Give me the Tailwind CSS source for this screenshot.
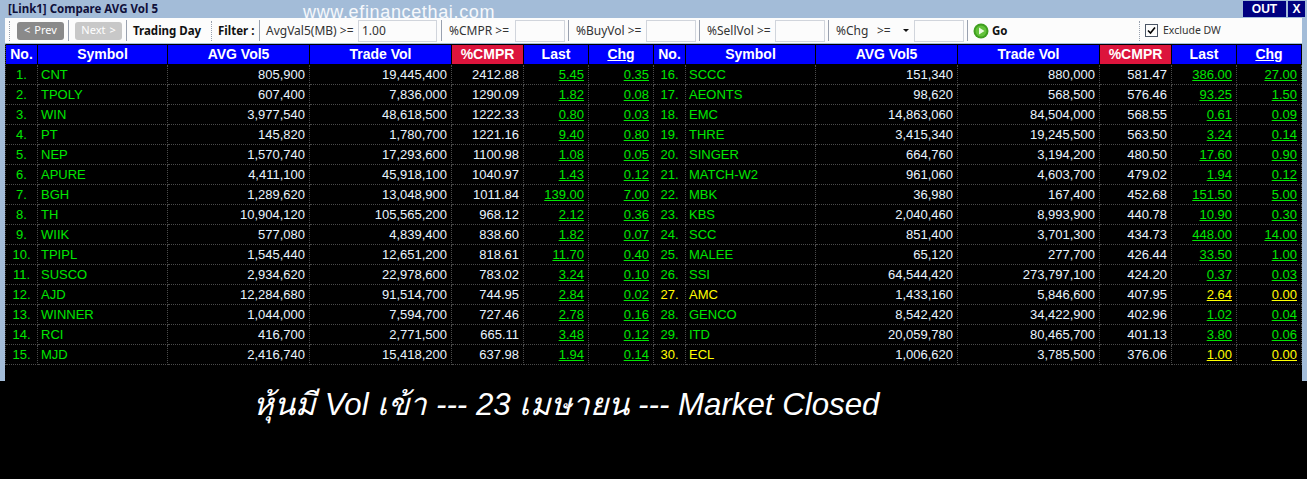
<!DOCTYPE html>
<html lang="th">
<head>
  <meta charset="UTF-8" />
  <title>Compare AVG Vol 5</title>
  <script src="https://cdn.jsdelivr.net/npm/@tailwindcss/browser@4"></script>
</head>
<body class="bg-black w-[1307px] h-[479px] overflow-hidden relative font-['Liberation_Sans',sans-serif]">
  <!-- window frame -->
  <div class="h-[381px] bg-[#a3bcd8] px-[1px] flex flex-col">
    <div class="h-[18px] flex items-center justify-between pl-[7px] pr-[1px]">
      <span class="text-[11.5px] font-bold text-[#10103a] font-['Noto_Sans',sans-serif]">[Link1] Compare AVG Vol 5</span>
      <div class="flex gap-[2px] h-[16px] -mt-[1px]">
        <span class="w-[43px] bg-[#000080] text-white text-[12px] font-bold flex items-center justify-center">OUT</span>
        <span class="w-[17px] bg-[#000080] text-white text-[12px] font-bold flex items-center justify-center">X</span>
      </div>
    </div>

    <!-- toolbar -->
    <div class="h-[25px] mx-[4px] bg-[#fcfcfc] flex items-center text-[12px] text-[#333] whitespace-nowrap font-['Noto_Sans',sans-serif]">
      <span class="w-[1px] h-[20px] ml-[4px] border-l border-dotted border-gray-400"></span>
      <button class="ml-[7px] w-[47px] h-[18px] rounded-[3px] bg-[#8a8a8a] text-white text-[11px] flex items-center justify-center gap-1"><span>&lt;</span><span>Prev</span></button>
      <span class="w-[1px] h-[21px] ml-[4px] bg-gray-400"></span>
      <button class="ml-[6px] w-[47px] h-[18px] rounded-[3px] bg-[#c8c8c8] text-white text-[11px] flex items-center justify-center gap-1"><span>Next</span><span>&gt;</span></button>
      <span class="w-[1px] h-[21px] ml-[4px] bg-gray-400"></span>
      <b class="ml-[6px] w-[68px] text-[11.5px] text-[#111]">Trading Day</b>
      <span class="w-[1px] h-[20px] ml-[10px] border-l border-dotted border-gray-400"></span>
      <b class="ml-[6px] w-[37px] text-[11.5px] text-[#111]">Filter :</b>
      <span class="w-[1px] h-[21px] ml-[4px] bg-gray-400"></span>
      <span class="ml-[6px] w-[92px]">AvgVal5(MB) &gt;=</span>
      <input value="1.00" class="w-[79px] h-[22px] border border-gray-300 px-[3px] text-[12px]" />
      <span class="w-[1px] h-[21px] ml-[4px] bg-gray-400"></span>
      <span class="ml-[7px] w-[66px]">%CMPR &gt;=</span>
      <input class="w-[50px] h-[22px] border border-gray-300" />
      <span class="w-[1px] h-[21px] ml-[3px] bg-gray-400"></span>
      <span class="ml-[7px] w-[70px]">%BuyVol &gt;=</span>
      <input class="w-[50px] h-[22px] border border-gray-300" />
      <span class="w-[1px] h-[21px] ml-[3px] bg-gray-400"></span>
      <span class="ml-[7px] w-[68px]">%SellVol &gt;=</span>
      <input class="w-[50px] h-[22px] border border-gray-300" />
      <span class="w-[1px] h-[21px] ml-[3px] bg-gray-400"></span>
      <span class="ml-[7px] w-[41px]">%Chg</span>
      <span class="w-[24px]">&gt;=</span>
      <svg class="w-[13px]" width="13" height="5" viewBox="0 0 13 5"><path d="M2 1h6L5 4z" fill="#111"/></svg>
      <input class="w-[50px] h-[22px] border border-gray-300" />
      <span class="w-[1px] h-[21px] ml-[3px] bg-gray-400"></span>
      <svg class="ml-[5px]" width="16" height="16" viewBox="0 0 16 16"><circle cx="8" cy="8" r="7.5" fill="#3f9f1f"/><circle cx="8" cy="8" r="5.5" fill="#63c23a"/><path d="M6 4.5l5.5 3.5L6 11.5z" fill="#eafbe0"/></svg>
      <b class="ml-[3px] w-[15px] text-[11.5px] text-[#111]">Go</b>
      <span class="w-[1px] h-[20px] ml-[132px] border-l border-dotted border-gray-400"></span>
      <span class="ml-[5px] w-[13px] h-[13px] border border-gray-600 flex items-center justify-center"><svg width="9" height="9" viewBox="0 0 9 9"><path d="M1 4.5l2.5 2.5L8 1.5" fill="none" stroke="#000" stroke-width="1.6"/></svg></span>
      <span class="ml-[5px] text-[10.5px]">Exclude DW</span>
    </div>

    <!-- quote table -->
    <div class="mt-[1px] mx-[4px] bg-black flex-1">
      <div id="board" class="grid grid-cols-[32px_130px_142px_142px_72px_65px_65px_32px_130px_142px_142px_72px_65px_65px] auto-rows-[20px] text-[13px] pt-[1px] border-l border-dotted border-[#4a4a4a] h-[321px]"></div>
    </div>
  </div>

  <!-- overlays burned into the capture -->
  <div class="absolute left-[303px] top-[1px] text-[18px] tracking-[0.65px] text-white/90 leading-[22px]">www.efinancethai.com</div>
  <div class="absolute left-[253px] top-[385px] text-[31.25px] italic text-white leading-[40px] whitespace-nowrap font-['Liberation_Sans','Noto_Sans',sans-serif]">หุ้นมี Vol เข้า --- 23 เมษายน --- Market Closed</div>

  <script>
    const rows = [
      ['CNT','805,900','19,445,400','2412.88','5.45','0.35'],
      ['TPOLY','607,400','7,836,000','1290.09','1.82','0.08'],
      ['WIN','3,977,540','48,618,500','1222.33','0.80','0.03'],
      ['PT','145,820','1,780,700','1221.16','9.40','0.80'],
      ['NEP','1,570,740','17,293,600','1100.98','1.08','0.05'],
      ['APURE','4,411,100','45,918,100','1040.97','1.43','0.12'],
      ['BGH','1,289,620','13,048,900','1011.84','139.00','7.00'],
      ['TH','10,904,120','105,565,200','968.12','2.12','0.36'],
      ['WIIK','577,080','4,839,400','838.60','1.82','0.07'],
      ['TPIPL','1,545,440','12,651,200','818.61','11.70','0.40'],
      ['SUSCO','2,934,620','22,978,600','783.02','3.24','0.10'],
      ['AJD','12,284,680','91,514,700','744.95','2.84','0.02'],
      ['WINNER','1,044,000','7,594,700','727.46','2.78','0.16'],
      ['RCI','416,700','2,771,500','665.11','3.48','0.12'],
      ['MJD','2,416,740','15,418,200','637.98','1.94','0.14'],
      ['SCCC','151,340','880,000','581.47','386.00','27.00'],
      ['AEONTS','98,620','568,500','576.46','93.25','1.50'],
      ['EMC','14,863,060','84,504,000','568.55','0.61','0.09'],
      ['THRE','3,415,340','19,245,500','563.50','3.24','0.14'],
      ['SINGER','664,760','3,194,200','480.50','17.60','0.90'],
      ['MATCH-W2','961,060','4,603,700','479.02','1.94','0.12'],
      ['MBK','36,980','167,400','452.68','151.50','5.00'],
      ['KBS','2,040,460','8,993,900','440.78','10.90','0.30'],
      ['SCC','851,400','3,701,300','434.73','448.00','14.00'],
      ['MALEE','65,120','277,700','426.44','33.50','1.00'],
      ['SSI','64,544,420','273,797,100','424.20','0.37','0.03'],
      ['AMC','1,433,160','5,846,600','407.95','2.64','0.00'],
      ['GENCO','8,542,420','34,422,900','402.96','1.02','0.04'],
      ['ITD','20,059,780','80,465,700','401.13','3.80','0.06'],
      ['ECL','1,006,620','3,785,500','376.06','1.00','0.00'],
    ];
    // cell rules: dotted dark lines between cells
    const line = 'border-r border-b border-dotted border-[#4a4a4a] ';
    const head = 'h-[19px] mb-[1px] bg-[#0000ff] text-white text-[14px] font-bold flex items-center justify-center border-r border-black ';
    const board = document.getElementById('board');

    function cell(text, cls) {
      const d = document.createElement('div');
      d.className = cls;
      d.textContent = text;
      board.appendChild(d);
    }
    function header() {
      cell('No.', head);
      cell('Symbol', head);
      cell('AVG Vol5', head);
      cell('Trade Vol', head);
      cell('%CMPR', 'h-[19px] mb-[1px] bg-[#dc143c] text-white text-[14px] font-bold flex items-center justify-center border-r border-black');
      cell('Last', head);
      cell('Chg', head + 'underline');
    }
    header();
    header();
    for (let i = 0; i < 15; i++) {
      [i, i + 15].forEach((n) => {
        const r = rows[n];
        const color = (r[5] === '0.00') ? 'text-[#ffff00]' : 'text-[#00e600]';
        cell((n + 1) + '.', line + color + ' flex items-center justify-center');
        cell(r[0], line + color + ' flex items-center pl-[3px]');
        cell(r[1], line + 'text-[#e8f4ff] flex items-center justify-end pr-[4px]');
        cell(r[2], line + 'text-[#e8f4ff] flex items-center justify-end pr-[4px]');
        cell(r[3], line + 'text-[#e8f4ff] flex items-center justify-end pr-[4px]');
        cell(r[4], line + color + ' flex items-center justify-end pr-[4px] underline underline-offset-1');
        cell(r[5], line + color + ' flex items-center justify-end pr-[4px] underline underline-offset-1');
      });
    }
  </script>
</body>
</html>
